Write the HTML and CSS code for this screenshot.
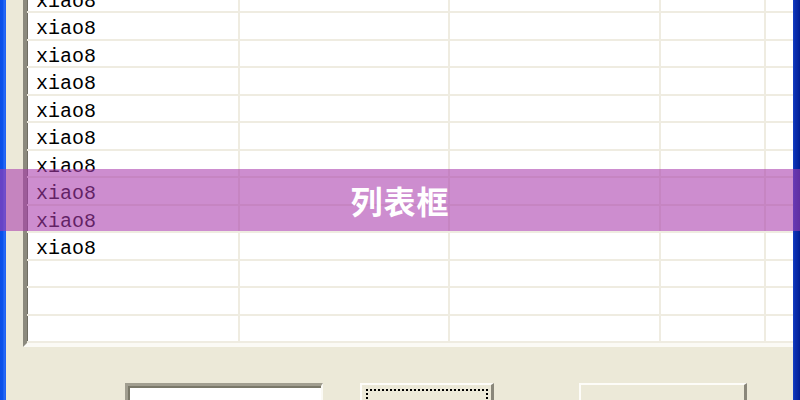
FILE: index.html
```html
<!DOCTYPE html>
<html>
<head>
<meta charset="utf-8">
<link rel="stylesheet" href="styles.css">
</head>
<body>
<div class="window">
  <div class="frame-left"></div>
  <div class="client">
    <div class="listview">
      <div class="row"><div class="cell c1">xiao8</div><div class="cell c2"></div><div class="cell c3"></div><div class="cell c4"></div><div class="cell c5"></div></div>
      <div class="row"><div class="cell c1">xiao8</div><div class="cell c2"></div><div class="cell c3"></div><div class="cell c4"></div><div class="cell c5"></div></div>
      <div class="row"><div class="cell c1">xiao8</div><div class="cell c2"></div><div class="cell c3"></div><div class="cell c4"></div><div class="cell c5"></div></div>
      <div class="row"><div class="cell c1">xiao8</div><div class="cell c2"></div><div class="cell c3"></div><div class="cell c4"></div><div class="cell c5"></div></div>
      <div class="row"><div class="cell c1">xiao8</div><div class="cell c2"></div><div class="cell c3"></div><div class="cell c4"></div><div class="cell c5"></div></div>
      <div class="row"><div class="cell c1">xiao8</div><div class="cell c2"></div><div class="cell c3"></div><div class="cell c4"></div><div class="cell c5"></div></div>
      <div class="row"><div class="cell c1">xiao8</div><div class="cell c2"></div><div class="cell c3"></div><div class="cell c4"></div><div class="cell c5"></div></div>
      <div class="row"><div class="cell c1">xiao8</div><div class="cell c2"></div><div class="cell c3"></div><div class="cell c4"></div><div class="cell c5"></div></div>
      <div class="row"><div class="cell c1">xiao8</div><div class="cell c2"></div><div class="cell c3"></div><div class="cell c4"></div><div class="cell c5"></div></div>
      <div class="row"><div class="cell c1">xiao8</div><div class="cell c2"></div><div class="cell c3"></div><div class="cell c4"></div><div class="cell c5"></div></div>
      <div class="row"><div class="cell c1"></div><div class="cell c2"></div><div class="cell c3"></div><div class="cell c4"></div><div class="cell c5"></div></div>
      <div class="row"><div class="cell c1"></div><div class="cell c2"></div><div class="cell c3"></div><div class="cell c4"></div><div class="cell c5"></div></div>
      <div class="row"><div class="cell c1"></div><div class="cell c2"></div><div class="cell c3"></div><div class="cell c4"></div><div class="cell c5"></div></div>
    </div>
    <div class="controls">
      <div class="edit"></div>
      <div class="btn btn-focus"><div class="focus-rect"></div></div>
      <div class="btn btn-plain"></div>
    </div>
  </div>
  <div class="frame-right"></div>
</div>
<div class="banner"><span class="banner-title">列表框</span></div>
</body>
</html>
```
FILE: styles.css
```css
html, body {
  margin: 0;
  padding: 0;
  width: 800px;
  height: 400px;
  overflow: hidden;
  background: #ece9d8;
}

.window {
  display: flex;
  width: 800px;
  height: 400px;
}

.frame-left {
  width: 6px;
  flex: none;
  background: linear-gradient(to right, #0a4ee6 0, #0b52ec 3px, #2a6cf6 4px, #1c5ff2 6px);
}

.frame-right {
  width: 7px;
  flex: none;
  background: linear-gradient(to right, #1642c8 0, #0a2fb0 2px, #0626a0 5px, #001d92 7px);
}

.client {
  flex: 1;
  display: flex;
  flex-direction: column;
  padding-left: 17px;
  overflow: hidden;
}

.listview {
  margin-top: -14.5px;
  background: #ffffff;
  border-left: 4px solid #8c8a7e;
  border-bottom: 4px solid #fbfaf5;
  box-shadow: inset 1px 0 0 #6f6d62;
  flex: none;
}

.row {
  display: grid;
  grid-template-columns: 213px 210px 211px 105px 1fr;
  height: 27.5px;
  box-sizing: border-box;
  border-bottom: 2px solid #efece1;
}

.cell {
  border-right: 2px solid #efece1;
  box-sizing: border-box;
  font-family: "Liberation Mono", "DejaVu Sans Mono", monospace;
  font-size: 20px;
  line-height: 25px;
  color: #000;
  padding-left: 9px;
  padding-top: 3px;
  white-space: nowrap;
  overflow: hidden;
}

.c5 {
  border-right: none;
}

.controls {
  display: flex;
  align-items: flex-start;
  margin-top: 36px;
  padding-left: 102px;
}

.edit {
  width: 198px;
  height: 40px;
  box-sizing: border-box;
  background: #ffffff;
  border-top: 3px solid #a19e90;
  border-left: 3px solid #a19e90;
  border-right: 2px solid #fbfaf5;
  box-shadow: inset 2px 2px 0 #7a7869;
  flex: none;
}

.btn {
  height: 40px;
  box-sizing: border-box;
  background: #ece9d8;
  border-top: 2px solid #fdfcf8;
  border-left: 2px solid #fdfcf8;
  border-right: 3px solid #8a877a;
  flex: none;
}

.btn-focus {
  width: 134px;
  margin-left: 37px;
  padding: 4px 3px 0 4px;
}

.focus-rect {
  height: 40px;
  border-top: 2px dotted #000;
  border-left: 2px dotted #000;
  border-right: 2px dotted #000;
}

.btn-plain {
  width: 168px;
  margin-left: 85px;
}

.banner {
  position: absolute;
  left: 0;
  top: 169px;
  width: 800px;
  height: 62px;
  background: rgba(168, 58, 172, 0.58);
  display: flex;
  align-items: center;
  justify-content: center;
}

.banner-title {
  font-family: "Noto Sans CJK SC", "Noto Sans", sans-serif;
  font-weight: 700;
  font-size: 32px;
  color: #ffffff;
  letter-spacing: 1px;
}
```
